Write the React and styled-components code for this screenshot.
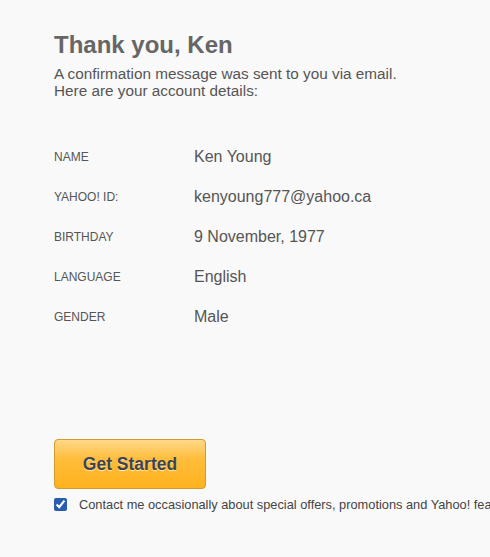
import React from 'react'
import styled, { createGlobalStyle } from 'styled-components'

const GlobalStyle = createGlobalStyle`
    html, body {
        margin: 0;
        padding: 0;
        background: #f9f9f9;
    }
    body {
        font-family: "Liberation Sans", Arial, Helvetica, sans-serif;
        color: #555;
    }
`

const details = [
    { label: 'Name', value: 'Ken Young' },
    { label: 'Yahoo! ID:', value: 'kenyoung777@yahoo.ca' },
    { label: 'Birthday', value: '9 November, 1977' },
    { label: 'Language', value: 'English' },
    { label: 'Gender', value: 'Male' },
]

export default function App() {
    return (
    <>
        <GlobalStyle />
        <Page>
            <Title>Thank you, Ken</Title>
            <Intro>
                A confirmation message was sent to you via email.<br />
                Here are your account details:
            </Intro>
            <Details>
                {details.map((d) => (
                    <Row key={d.label}>
                        <Label>{d.label}</Label>
                        <Value>{d.value}</Value>
                    </Row>
                ))}
            </Details>
            <Button>Get Started</Button>
            <Consent>
                <Check type="checkbox" defaultChecked />
                <span>Contact me occasionally about special offers, promotions and Yahoo! features</span>
            </Consent>
        </Page>
    </>
    )
}

const Page = styled.div`
    width: 490px;
    height: 557px;
    overflow: hidden;
    box-sizing: border-box;
    padding: 31px 0 0 54px;
`

const Title = styled.h1`
    margin: 0;
    font-size: 24px;
    line-height: 28px;
    font-weight: bold;
    color: #666;
`

const Intro = styled.p`
    margin: 6px 0 0;
    font-size: 15.3px;
    line-height: 17px;
    color: #555;
`

const Details = styled.div`
    margin-top: 47px;
    display: flex;
    flex-direction: column;
    gap: 18px;
`

const Row = styled.div`
    display: grid;
    grid-template-columns: 140px 1fr;
    align-items: center;
    height: 22px;
`

const Label = styled.div`
    font-size: 12px;
    text-transform: uppercase;
    color: #555;
`

const Value = styled.div`
    font-size: 16px;
    color: #555;
`

const Button = styled.button`
    display: block;
    margin-top: 111px;
    width: 152px;
    height: 50px;
    border: 1px solid #d39a30;
    border-radius: 4px;
    background: linear-gradient(to bottom, #ffd98a 0%, #ffbd3a 40%, #ffb21e 100%);
    font-family: "Liberation Sans", Arial, Helvetica, sans-serif;
    font-size: 17.5px;
    font-weight: bold;
    color: #3f4350;
    text-shadow: 0 1px 1px rgba(255, 255, 255, 0.7);
    cursor: pointer;
`

const Consent = styled.label`
    display: flex;
    align-items: center;
    gap: 12px;
    margin-top: 8px;
    white-space: nowrap;
    font-size: 12.8px;
    color: #444;
`

const Check = styled.input`
    margin: 0;
    width: 13px;
    height: 13px;
    flex-shrink: 0;
    accent-color: #2a5db0;
`
